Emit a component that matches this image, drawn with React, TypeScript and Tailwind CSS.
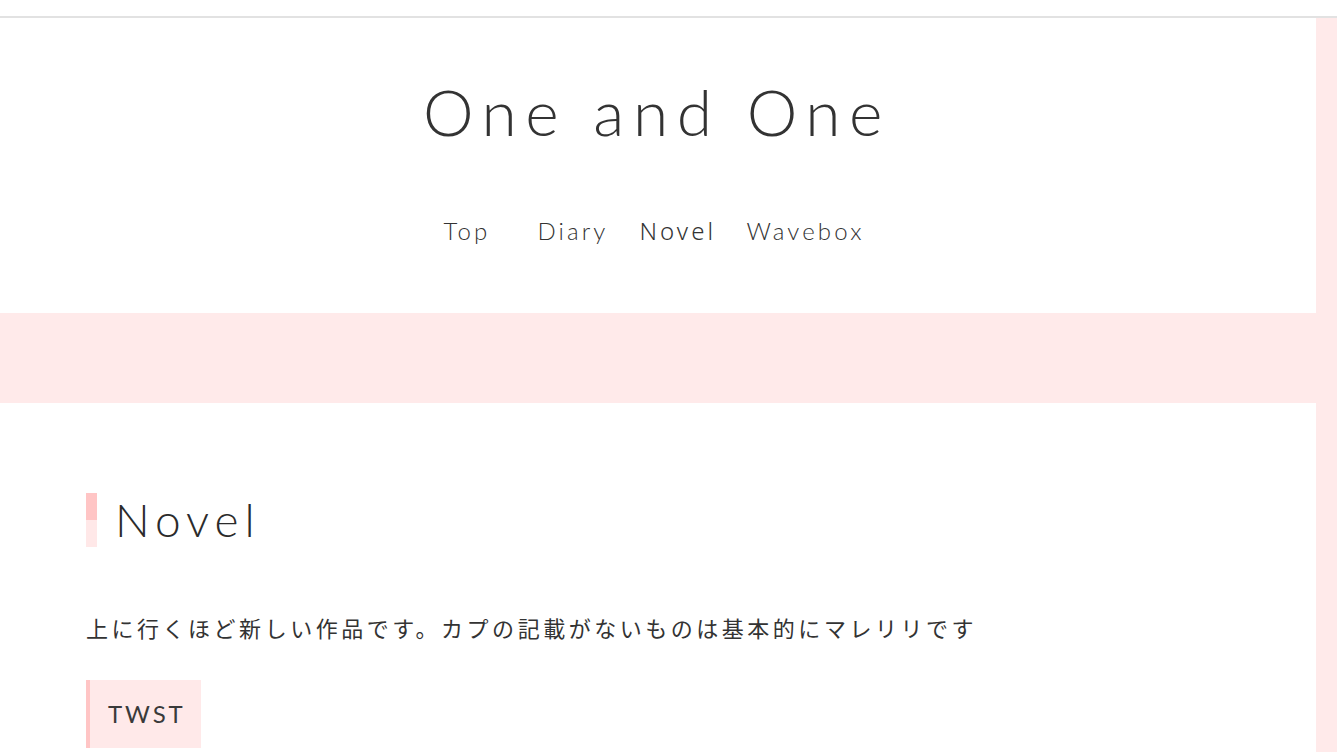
const TITLE_FONT = "font-['Lato','Noto_Sans',sans-serif]";

const NAV = [
  { label: "Top", font: "font-['Lato',sans-serif] font-light", pad: "w-[94px]" },
  { label: "Diary", font: "font-['Lato',sans-serif] font-light", pad: "w-[102px]" },
  { label: "Novel", font: "font-['Noto_Sans',sans-serif] font-light", pad: "w-[107px]" },
  { label: "Wavebox", font: "font-['Lato',sans-serif] font-light", pad: "" },
];

export default function App() {
  return (
    <div className="min-h-[752px] w-full bg-white text-[#333]">
      {/* browser-ish top strip */}
      <div className="h-[18px] border-b-2 border-[#e2e2e2] bg-white" />

      <div className="flex">
        <main className="w-[1316px] shrink-0 bg-[#ffeaea]">
          {/* ——— header ——— */}
          <header className="flex h-[295px] flex-col items-center bg-white pt-[59px]">
            <h1
              className={`${TITLE_FONT} pr-[2px] text-[64px] leading-[70px] font-light tracking-[0.135em] text-[#333]`}
            >
              One and One
            </h1>
            <nav className="mt-[66px] mr-[8px] flex items-baseline">
              {NAV.map((n) => (
                <a
                  key={n.label}
                  className={`${n.font} ${n.pad} text-[24px] tracking-[0.13em] text-[#333]`}
                >
                  {n.label}
                </a>
              ))}
            </nav>
          </header>

          {/* ——— pink band ——— */}
          <div className="h-[90px]" />

          {/* ——— content ——— */}
          <section className="min-h-[400px] bg-white px-[86px] pt-[90px]">
            <div className="flex items-center">
              <span className="flex h-[54px] w-[11px] flex-col">
                <span className="flex-1 bg-[#ffc5c5]" />
                <span className="flex-1 bg-[#ffe8e8]" />
              </span>
              <h2
                className={`${TITLE_FONT} ml-[18px] text-[46px] leading-[54px] font-light tracking-[0.13em] text-[#2b2b2b]`}
              >
                Novel
              </h2>
            </div>

            <p className="mt-[64px] font-['Noto_Sans_CJK_JP',sans-serif] text-[22px] leading-[32px] tracking-[0.16em] text-[#333]">
              上に行くほど新しい作品です。カプの記載がないものは基本的にマレリリです
            </p>

            <div className="mt-[37px] inline-flex h-[68px] items-center border-l-4 border-[#ffc5c5] bg-[#ffe9e9] pr-[15px] pl-[18px]">
              <span className="font-['Lato',sans-serif] text-[24px] tracking-[0.12em] text-[#3a3a3a]">
                TWST
              </span>
            </div>
          </section>
        </main>
        <div className="flex-1 bg-[#ffeaea]" />
      </div>
    </div>
  );
}
